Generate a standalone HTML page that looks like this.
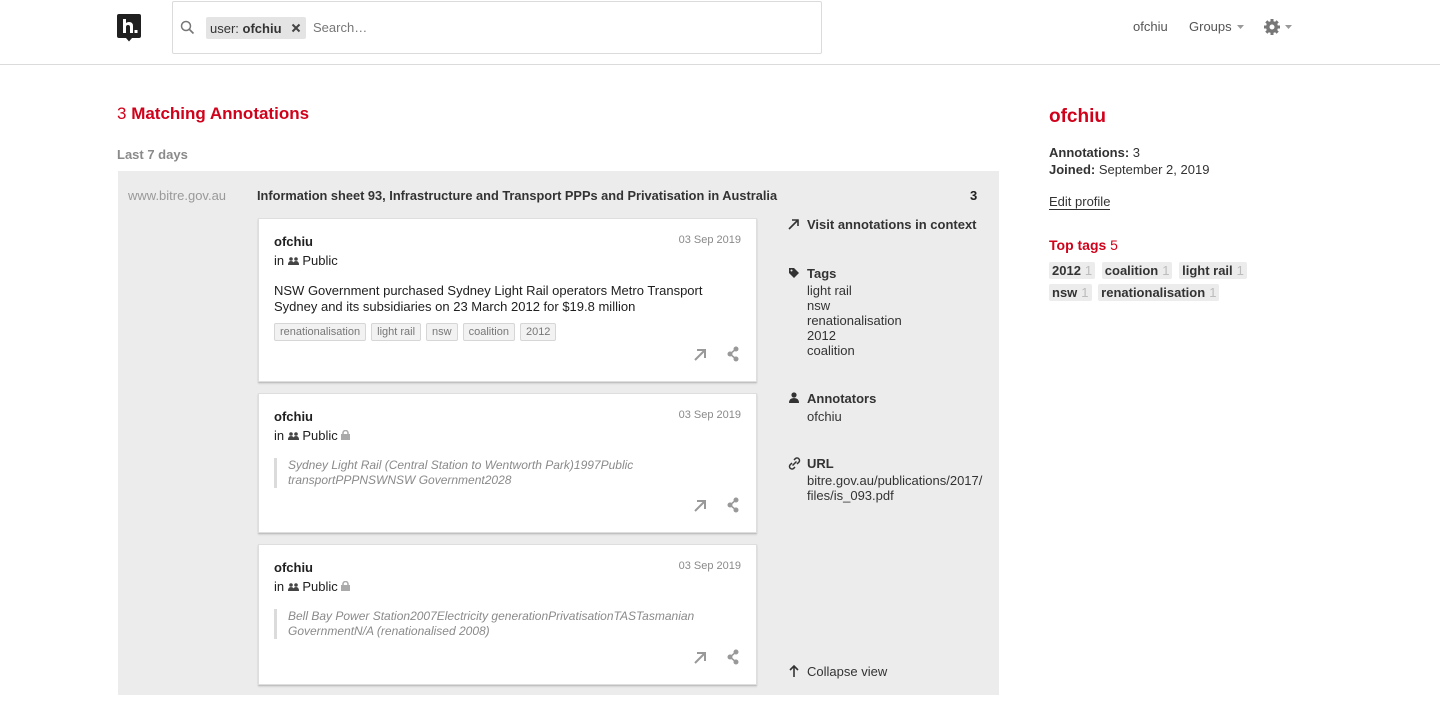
<!DOCTYPE html>
<html><head><meta charset="utf-8"><style>
*{box-sizing:border-box;margin:0;padding:0}
body{width:1440px;height:728px;background:#fff;font-family:"Liberation Sans",Arial,sans-serif;font-size:13px;color:#202020;position:relative;overflow:hidden}
.a{position:absolute;white-space:nowrap}
.red{color:#d0021b}
.card{position:absolute;left:258px;width:499px;background:#fff;box-shadow:0 1px 1px rgba(0,0,0,.15),0 2px 2px rgba(0,0,0,.08);border:1px solid #dedede}
.card .u{position:absolute;left:15px;top:15px;font-weight:bold}
.card .d{position:absolute;right:15px;top:15px;color:#8a8a8a;font-size:11px}
.card .g{position:absolute;left:15px;top:34px}
.tag{display:inline-block;border:1px solid #d6d6d6;background:#f2f2f2;color:#777;font-size:11px;padding:2px 5px;margin-right:5px;border-radius:2px}
.q{position:absolute;left:15px;border-left:3px solid #dbdbdb;padding-left:11px;color:#8a8a8a;font-style:italic;font-size:12px;line-height:15px}
.ic{position:absolute;right:15px;bottom:16px}
.chip{display:inline-block;background:#ececec;font-weight:bold;padding:1px 3px;border-radius:2px;margin-right:3px;color:#333}
.chip span{color:#bbb;font-weight:normal;margin-left:4px}
</style></head><body>
<div class="a" style="left:0;top:64px;width:1440px;border-top:1px solid #dbdbdb"></div>
<svg class="a" style="left:117px;top:14px" width="25" height="28" viewBox="0 0 25 28"><rect width="24" height="24" rx="2" fill="#202020"/><path d="M9 24h6l-3 3.5z" fill="#202020"/><path d="M6 5v14h3v-6q0-2 2-2t2 2v6h3v-7q0-4-4-4-2 0-3 1V5z" fill="#fff"/><rect x="17.5" y="16" width="3" height="3" fill="#fff"/></svg>
<div class="a" style="left:172px;top:1px;width:650px;height:53px;border:1px solid #dbdbdb;border-radius:2px"></div>
<svg class="a" style="left:180px;top:20px" width="15" height="15" viewBox="0 0 15 15"><circle cx="6" cy="6" r="4.5" fill="none" stroke="#777" stroke-width="1.5"/><path d="M9.5 9.5L13.5 13.5" stroke="#777" stroke-width="1.6"/></svg>
<div class="a" style="left:206px;top:17px;width:100px;height:22px;background:#e4e4e4;border-radius:2px;padding:4px 4px;color:#333">user: <b>ofchiu</b></div>
<svg class="a" style="left:291px;top:23px" width="10" height="10"><path d="M1.5 1.5l7 7M8.5 1.5l-7 7" stroke="#444" stroke-width="2"/></svg>
<div class="a" style="left:313px;top:20px;color:#777">Search…</div>
<div class="a" style="left:1133px;top:19px;color:#555">ofchiu</div>
<div class="a" style="left:1189px;top:19px;color:#555">Groups</div>
<svg class="a" style="left:1237px;top:25px" width="8" height="5"><path d="M0 0h7L3.5 4z" fill="#999"/></svg>
<svg class="a" style="left:1263px;top:18px" width="18" height="18" viewBox="0 0 18 18"><g fill="#777"><circle cx="9" cy="9" r="6"/><g stroke="#777" stroke-width="3"><path d="M9 1v16M1 9h16M3.3 3.3l11.4 11.4M14.7 3.3L3.3 14.7"/></g></g><circle cx="9" cy="9" r="2.5" fill="#fff"/></svg>
<svg class="a" style="left:1285px;top:25px" width="8" height="5"><path d="M0 0h7L3.5 4z" fill="#999"/></svg>

<div class="a red" style="left:117px;top:104px;font-size:17px">3 <b>Matching Annotations</b></div>
<div class="a" style="left:117px;top:147px;color:#8a8a8a;font-weight:bold">Last 7 days</div>
<div class="a" style="left:118px;top:171px;width:881px;height:524px;background:#ececec"></div>
<div class="a" style="left:128px;top:188px;color:#999">www.bitre.gov.au</div>
<div class="a" style="left:257px;top:188px;font-weight:bold;color:#333;font-size:12.8px">Information sheet 93, Infrastructure and Transport PPPs and Privatisation in Australia</div>
<div class="a" style="left:970px;top:188px;font-weight:bold">3</div>

<div class="card" style="top:218px;height:164px">
<div class="u">ofchiu</div><div class="d">03 Sep 2019</div><div class="g">in <svg width="11" height="8"><g fill="#444"><circle cx="3" cy="2" r="1.8"/><circle cx="8" cy="2" r="1.8"/><path d="M0 8q0-4 3-4t3 4zM5 8q0-4 3-4t3 4z"/></g></svg> Public</div>
<div class="a" style="left:15px;top:64px;line-height:16px;white-space:normal;width:470px">NSW Government purchased Sydney Light Rail operators Metro Transport Sydney and its subsidiaries on 23 March 2012 for $19.8 million</div>
<div class="a" style="left:15px;top:104px"><span class="tag">renationalisation</span><span class="tag">light rail</span><span class="tag">nsw</span><span class="tag">coalition</span><span class="tag">2012</span></div>
<div class="ic"><svg width="50" height="16"><path d="M4 14L14 4M6 4h8v8" stroke="#999" stroke-width="2" fill="none"/><g fill="#999"><circle cx="39" cy="8" r="2.5"/><circle cx="45" cy="3" r="2.5"/><circle cx="45" cy="13" r="2.5"/></g><path d="M39 8L45 3M39 8L45 13" stroke="#999" stroke-width="1.5"/></svg></div>
</div>
<div class="card" style="top:393px;height:140px">
<div class="u">ofchiu</div><div class="d">03 Sep 2019</div><div class="g">in <svg width="11" height="8"><g fill="#444"><circle cx="3" cy="2" r="1.8"/><circle cx="8" cy="2" r="1.8"/><path d="M0 8q0-4 3-4t3 4zM5 8q0-4 3-4t3 4z"/></g></svg> Public <svg width="9" height="10"><rect x="0" y="4" width="9" height="6" fill="#aaa"/><path d="M2 4V3a2.5 2.5 0 0 1 5 0v1" stroke="#aaa" stroke-width="1.5" fill="none"/></svg></div>
<div class="q" style="top:64px">Sydney Light Rail (Central Station to Wentworth Park)1997Public<br>transportPPPNSWNSW Government2028</div>
<div class="ic"><svg width="50" height="16"><path d="M4 14L14 4M6 4h8v8" stroke="#999" stroke-width="2" fill="none"/><g fill="#999"><circle cx="39" cy="8" r="2.5"/><circle cx="45" cy="3" r="2.5"/><circle cx="45" cy="13" r="2.5"/></g><path d="M39 8L45 3M39 8L45 13" stroke="#999" stroke-width="1.5"/></svg></div>
</div>
<div class="card" style="top:544px;height:141px">
<div class="u">ofchiu</div><div class="d">03 Sep 2019</div><div class="g">in <svg width="11" height="8"><g fill="#444"><circle cx="3" cy="2" r="1.8"/><circle cx="8" cy="2" r="1.8"/><path d="M0 8q0-4 3-4t3 4zM5 8q0-4 3-4t3 4z"/></g></svg> Public <svg width="9" height="10"><rect x="0" y="4" width="9" height="6" fill="#aaa"/><path d="M2 4V3a2.5 2.5 0 0 1 5 0v1" stroke="#aaa" stroke-width="1.5" fill="none"/></svg></div>
<div class="q" style="top:64px">Bell Bay Power Station2007Electricity generationPrivatisationTASTasmanian<br>GovernmentN/A (renationalised 2008)</div>
<div class="ic"><svg width="50" height="16"><path d="M4 14L14 4M6 4h8v8" stroke="#999" stroke-width="2" fill="none"/><g fill="#999"><circle cx="39" cy="8" r="2.5"/><circle cx="45" cy="3" r="2.5"/><circle cx="45" cy="13" r="2.5"/></g><path d="M39 8L45 3M39 8L45 13" stroke="#999" stroke-width="1.5"/></svg></div>
</div>

<svg class="a" style="left:788px;top:218px" width="12" height="12"><path d="M1 11L10 2M4 2h6v6" stroke="#333" stroke-width="1.6" fill="none"/></svg>
<div class="a" style="left:807px;top:217px;font-weight:bold;color:#333">Visit annotations in context</div>
<svg class="a" style="left:788px;top:267px" width="12" height="12"><path d="M1 1h5l5 5-5 5-5-5z" fill="#333"/><circle cx="3.5" cy="3.5" r="1" fill="#ececec"/></svg>
<div class="a" style="left:807px;top:266px;font-weight:bold;color:#333">Tags</div>
<div class="a" style="left:807px;top:283px;line-height:15px;color:#333">light rail<br>nsw<br>renationalisation<br>2012<br>coalition</div>
<svg class="a" style="left:788px;top:392px" width="12" height="12"><circle cx="6" cy="3" r="2.6" fill="#333"/><path d="M1 11q0-5 5-5t5 5z" fill="#333"/></svg>
<div class="a" style="left:807px;top:391px;font-weight:bold;color:#333">Annotators</div>
<div class="a" style="left:807px;top:409px;color:#333">ofchiu</div>
<svg class="a" style="left:788px;top:457px" width="13" height="13"><path d="M6 3l1.5-1.5a2.5 2.5 0 0 1 3.5 3.5L9 7M7 10l-1.5 1.5a2.5 2.5 0 0 1-3.5-3.5L4 6M4.5 8.5l4-4" stroke="#333" stroke-width="1.5" fill="none"/></svg>
<div class="a" style="left:807px;top:456px;font-weight:bold;color:#333">URL</div>
<div class="a" style="left:807px;top:473px;line-height:15px;color:#333">bitre.gov.au/publications/2017/<br>files/is_093.pdf</div>
<svg class="a" style="left:789px;top:664px" width="10" height="13"><path d="M5 13V2M1 6l4-4 4 4" stroke="#333" stroke-width="1.6" fill="none"/></svg>
<div class="a" style="left:807px;top:664px;color:#333">Collapse view</div>

<div class="a red" style="left:1049px;top:106px;font-size:19px;font-weight:bold">ofchiu</div>
<div class="a" style="left:1049px;top:145px;color:#333"><b>Annotations:</b> 3</div>
<div class="a" style="left:1049px;top:162px;color:#333"><b>Joined:</b> September 2, 2019</div>
<div class="a" style="left:1049px;top:194px;color:#333;border-bottom:1px solid #333;line-height:15px">Edit profile</div>
<div class="a red" style="left:1049px;top:237px;font-size:14px"><b>Top tags</b> 5</div>
<div class="a" style="left:1049px;top:262px"><span class="chip">2012<span>1</span></span> <span class="chip">coalition<span>1</span></span> <span class="chip">light rail<span>1</span></span></div>
<div class="a" style="left:1049px;top:284px"><span class="chip">nsw<span>1</span></span> <span class="chip">renationalisation<span>1</span></span></div>
</body></html>
